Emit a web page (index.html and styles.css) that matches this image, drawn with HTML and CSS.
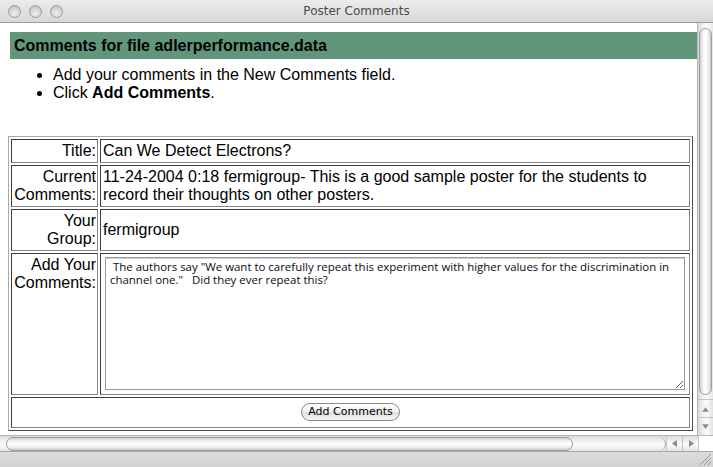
FILE: index.html
```html
<!DOCTYPE html>
<html>
<head>
<meta charset="utf-8">
<title>Poster Comments</title>
<link rel="stylesheet" href="styles.css">
</head>
<body>
<div class="window">
  <div class="titlebar">
    <div class="lights"><span class="light"></span><span class="light"></span><span class="light"></span></div>
    <div class="title">Poster Comments</div>
    <div></div>
  </div>
  <div class="main">
    <div class="page">
      <div class="heading">Comments for file adlerperformance.data</div>
      <ul class="steps">
        <li>Add your comments in the New Comments field.</li>
        <li>Click <b>Add Comments</b>.</li>
      </ul>
      <table class="form">
        <tr>
          <td class="label">Title:</td>
          <td class="value">Can We Detect Electrons?</td>
        </tr>
        <tr>
          <td class="label">Current Comments:</td>
          <td class="value">11-24-2004 0:18 fermigroup- This is a good sample poster for the students to record their thoughts on other posters.</td>
        </tr>
        <tr>
          <td class="label">Your Group:</td>
          <td class="value">fermigroup</td>
        </tr>
        <tr>
          <td class="label top">Add Your Comments:</td>
          <td class="value"><textarea class="comment"> The authors say "We want to carefully repeat this experiment with higher values for the discrimination in channel one."   Did they ever repeat this?</textarea></td>
        </tr>
        <tr>
          <td class="actions" colspan="2"><button class="submit" type="button">Add Comments</button></td>
        </tr>
      </table>
    </div>
    <div class="vscroll">
      <div class="vtrack"><div class="vthumb"></div></div>
      <div class="vbtn"><svg width="16" height="18" viewBox="0 0 16 18"><polygon points="8,7 11.5,12 4.5,12" fill="#8a8a8a"/></svg></div>
      <div class="vbtn"><svg width="16" height="18" viewBox="0 0 16 18"><polygon points="4.5,6 11.5,6 8,11" fill="#8a8a8a"/></svg></div>
    </div>
  </div>
  <div class="hscroll">
    <div class="htrack"><div class="hthumb"></div><div class="htail"></div></div>
    <div class="hbtn"><svg width="15" height="15" viewBox="0 0 15 15"><polygon points="5,7.5 10,4 10,11" fill="#8a8a8a"/></svg></div>
    <div class="hbtn"><svg width="16" height="15" viewBox="0 0 16 15"><polygon points="6,4 11,7.5 6,11" fill="#8a8a8a"/></svg></div>
    <div class="corner"></div>
  </div>
  <div class="statusbar">
    <svg class="grip" width="14" height="14" viewBox="0 0 14 14">
      <line x1="13" y1="2" x2="2" y2="13" stroke="#9a9a9a" stroke-width="1"/>
      <line x1="13" y1="6" x2="6" y2="13" stroke="#9a9a9a" stroke-width="1"/>
      <line x1="13" y1="10" x2="10" y2="13" stroke="#9a9a9a" stroke-width="1"/>
    </svg>
  </div>
</div>
</body>
</html>
```
FILE: styles.css
```css
html, body {
  margin: 0;
  padding: 0;
}

body {
  background: #ffffff;
}

.window {
  width: 713px;
  height: 467px;
  display: flex;
  flex-direction: column;
  overflow: hidden;
}

.titlebar {
  height: 22px;
  border-bottom: 1px solid #9c9c9c;
  background: linear-gradient(#ececec, #e2e2e2 50%, #d7d7d7);
  display: grid;
  grid-template-columns: 1fr auto 1fr;
  align-items: center;
}

.lights {
  display: flex;
  gap: 8px;
  padding-left: 8px;
}

.light {
  width: 11px;
  height: 11px;
  border-radius: 50%;
  border: 1px solid #9c9c9c;
  background: radial-gradient(circle at 50% 70%, #eeeeee, #d0d0d0 60%, #b6b6b6);
}

.title {
  font: 12px/22px "DejaVu Sans", sans-serif;
  color: #4a4a4a;
}

.main {
  height: 413px;
  display: flex;
}

.page {
  flex: 1;
  overflow: hidden;
  background: #ffffff;
  padding-top: 9px;
  font: 16px/18px "Liberation Sans", Arial, sans-serif;
  color: #000;
}

.heading {
  margin-left: 10px;
  height: 27px;
  line-height: 27px;
  padding-left: 4px;
  background: #62967a;
  font-weight: bold;
}

.steps {
  margin: 7px 0 0 0;
  padding-left: 53px;
}

.form {
  margin: 34px 0 0 8px;
  width: 685px;
  border-collapse: separate;
  border-spacing: 2px;
  border: 1px solid;
  border-color: #a8a8a8 #4a4a4a #4a4a4a #a8a8a8;
  font: 16px/18px "Liberation Sans", Arial, sans-serif;
}

.form td {
  border: 1px solid;
  border-color: #3c3c3c #858585 #858585 #3c3c3c;
  padding: 2px;
}

.form td.label {
  width: 82px;
  padding: 2px 1px 2px 2px;
  text-align: right;
}

.form td.top {
  vertical-align: top;
}

.comment {
  display: block;
  box-sizing: border-box;
  width: 580px;
  height: 133px;
  margin: 1px 0 2px 2px;
  border: 1px solid #9a9a9a;
  box-shadow: inset 0 1px 0 #d0d0d0;
  padding: 2px 4px;
  font: 11.45px/13px "Open Sans", sans-serif;
  color: #0a0a14;
  outline: none;
}

.form td.actions {
  padding: 5px 2px 6px;
}

.submit {
  display: block;
  margin: 0 auto;
  width: 99px;
  height: 18px;
  padding: 0;
  border: 1px solid #8a8a8a;
  border-radius: 9px;
  background: linear-gradient(#ffffff, #f2f2f2 45%, #dedede 55%, #f6f6f6);
  font: 11px/16px "DejaVu Sans", sans-serif;
  color: #000;
}

.vscroll {
  width: 16px;
  display: flex;
  flex-direction: column;
  border-left: 1px solid #b4b4b4;
  box-sizing: border-box;
}

.vtrack {
  flex: 1;
  padding-top: 5px;
  background: linear-gradient(to right, #d6d6d6, #efefef 30%, #fbfbfb 60%, #e6e6e6);
  display: flex;
  flex-direction: column;
  align-items: center;
}

.vthumb {
  width: 13px;
  height: 367px;
  box-sizing: border-box;
  border: 1px solid #9c9c9c;
  border-radius: 7px;
  background: linear-gradient(to right, #cfcfcf, #f6f6f6 30%, #ffffff 50%, #ebebeb 80%, #c6c6c6);
}

.vbtn {
  height: 18px;
  border-top: 1px solid #c4c4c4;
  box-sizing: border-box;
  background: linear-gradient(to right, #dadada, #f4f4f4 40%, #fafafa 60%, #e2e2e2);
  display: flex;
  justify-content: center;
  align-items: center;
}

.vbtn svg {
  display: block;
}

.hscroll {
  height: 15px;
  display: flex;
  border-top: 1px solid #b4b4b4;
}

.htrack {
  width: 666px;
  padding-left: 6px;
  box-sizing: border-box;
  display: flex;
  align-items: center;
  background: linear-gradient(#d9d9d9, #efefef 30%, #fbfbfb 60%, #e4e4e4);
}

.hthumb {
  width: 567px;
  height: 14px;
  box-sizing: border-box;
  border: 1px solid #9c9c9c;
  border-radius: 7px;
  background: linear-gradient(#d0d0d0, #f6f6f6 30%, #ffffff 50%, #ebebeb 80%, #c8c8c8);
}

.htail {
  flex: 1;
  height: 14px;
  border-right: 1px solid #a8a8a8;
  border-radius: 0 7px 7px 0;
}

.hbtn {
  width: 15px;
  border-left: 1px solid #c4c4c4;
  background: linear-gradient(#dadada, #f4f4f4 40%, #fafafa 60%, #e2e2e2);
}

.hbtn svg {
  display: block;
}

.corner {
  flex: 1;
  background: #ffffff;
  border-left: 1px solid #c8c8c8;
}

.statusbar {
  flex: 1;
  border-top: 1px solid #a8a8a8;
  background: linear-gradient(#dcdcdc, #d2d2d2);
  display: flex;
  justify-content: flex-end;
  align-items: flex-end;
}

.grip {
  display: block;
  margin: 0 1px 1px 0;
}
```
